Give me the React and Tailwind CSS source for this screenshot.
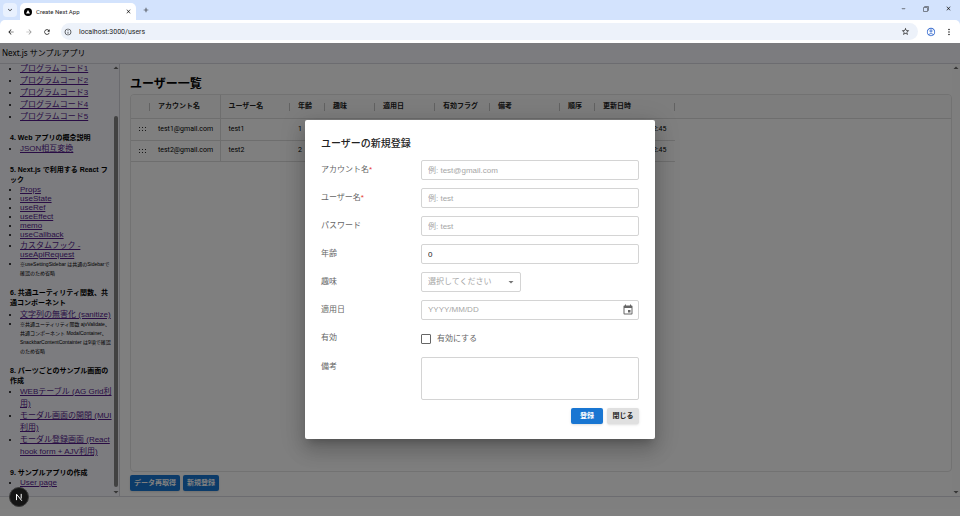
import React from 'react'
import { useState } from 'react';
import {
  MdArrowBack, MdArrowForward, MdRefresh, MdInfoOutline, MdStarBorder, MdMoreVert,
  MdClose, MdAdd, MdKeyboardArrowDown, MdArrowDropDown, MdArrowDropUp, MdEvent,
  MdMinimize, MdFilterNone, MdOutlineAccountCircle
} from 'react-icons/md';

const sections = [
  {
    title: '',
    items: [
      { text: 'プログラムコード1' },
      { text: 'プログラムコード2' },
      { text: 'プログラムコード3' },
      { text: 'プログラムコード4' },
      { text: 'プログラムコード5' }
    ]
  },
  { title: '4. Web アプリの概念説明', items: [{ text: 'JSON相互変換' }] },
  {
    title: '5. Next.js で利用する React フック',
    items: [
      { text: 'Props', compact: true },
      { text: 'useState', compact: true },
      { text: 'useRef', compact: true },
      { text: 'useEffect', compact: true },
      { text: 'memo', compact: true },
      { text: 'useCallback', compact: true },
      { text: 'カスタムフック - useApiRequest', compact: true },
      { text: '※useSettingSidebar は共通のSidebarで確認のため省略', note: true }
    ]
  },
  {
    title: '6. 共通ユーティリティ関数、共通コンポーネント',
    items: [
      { text: '文字列の無害化 (sanitize)', compact: true },
      { text: '※共通ユーティリティ関数 ajvValidate、共通コンポーネント ModalContainer、SnackbarContentContainter は9項で確認のため省略', note: true }
    ]
  },
  {
    title: '8. パーツごとのサンプル画面の作成',
    items: [
      { text: 'WEBテーブル (AG Grid利用)' },
      { text: 'モーダル画面の開閉 (MUI利用)' },
      { text: 'モーダル登録画面 (React hook form + AJV利用)' }
    ]
  },
  { title: '9. サンプルアプリの作成', items: [{ text: 'User page', compact: true }] }
];

const columns = [
  { label: '', width: 'w-[19px]' },
  { label: 'アカウント名', width: 'w-[70px]' },
  { label: 'ユーザー名', width: 'w-[70px]' },
  { label: '年齢', width: 'w-[35px]' },
  { label: '趣味', width: 'w-[50px]' },
  { label: '適用日', width: 'w-[60px]' },
  { label: '有効フラグ', width: 'w-[55px]' },
  { label: '備考', width: 'w-[70px]' },
  { label: '順序', width: 'w-[35px]' },
  { label: '更新日時', width: 'w-20' }
];

const users = [
  ['test1@gmail.com', 'test1', '1', '', '', '', '', '', '2025/1/12, 12:12:45'],
  ['test2@gmail.com', 'test2', '2', '', '', '', '', '', '2025/1/12, 12:12:45']
];

const fieldClass = 'block h-5 w-full rounded-[2px] border border-[#d4d4d4] bg-white px-1.5 text-[8px] text-[#222] placeholder:text-[#a6a6a6] outline-none';

const BrowserBar = () => (
  <div className="shrink-0 bg-[#d3e3fd] font-['Roboto','Noto_Sans_CJK_JP',sans-serif] text-[#1f1f1f]">
    <div className="flex h-5 items-end pl-[3px]">
      <button className="mb-[3px] flex h-3.5 w-3.5 items-center justify-center rounded-[4px] bg-[#e9f1fe]" aria-label="タブを検索">
        <MdKeyboardArrowDown className="h-2 w-2" />
      </button>
      <div className="ml-[3px] flex h-[17px] w-[116px] items-center rounded-t-[5px] bg-white px-1">
        <svg viewBox="0 0 16 16" className="h-2 w-2">
          <circle cx="8" cy="8" r="8" fill="#000" />
          <path d="M8 4.2l4 6.8H4z" fill="#fff" />
        </svg>
        <span className="ml-1 flex-1 text-[6px] leading-none">Create Next App</span>
        <button aria-label="閉じる"><MdClose className="h-[7px] w-[7px]" /></button>
      </div>
      <button className="mb-1.5 ml-1.5" aria-label="新しいタブ"><MdAdd className="h-2 w-2" /></button>
      <div className="ml-auto flex items-center gap-4 pr-2 pb-1.5">
        <MdMinimize className="mb-1 h-[7px] w-[7px]" />
        <MdFilterNone className="h-[6px] w-[6px] rotate-90 -scale-y-100" />
        <MdClose className="h-[7px] w-[7px]" />
      </div>
    </div>
    <div className="flex h-[23px] items-center rounded-t-[5px] bg-white pr-1.5 pl-[7px]">
      <button aria-label="戻る"><MdArrowBack className="h-2 w-2" /></button>
      <button className="ml-2.5 text-[#9a9a9a]" aria-label="進む"><MdArrowForward className="h-2 w-2" /></button>
      <button className="ml-2.5" aria-label="再読み込み"><MdRefresh className="h-2 w-2" /></button>
      <div className="ml-2.5 flex h-[17px] flex-1 items-center rounded-full bg-[#edf2fa] px-[3px] pr-2">
        <MdInfoOutline className="h-2 w-2" />
        <input
          className="ml-[7px] flex-1 bg-transparent text-[7px] leading-none outline-none"
          aria-label="アドレス"
          defaultValue="localhost:3000/users"
        />
        <MdStarBorder className="h-[9px] w-[9px]" />
      </div>
      <MdOutlineAccountCircle className="ml-2 h-2.5 w-2.5 text-[#3c6fd0]" />
      <MdMoreVert className="ml-2 h-2.5 w-2.5" />
    </div>
  </div>
);

const Sidebar = () => (
  <aside className="flex w-[120px] shrink-0 border-r border-[#d4d4dc] bg-[#f8f8ff]">
    <nav className="flex min-w-0 flex-1 flex-col justify-end overflow-hidden pb-[9px] pl-2.5">
      {sections.map((section, i) => (
        <div key={i} className={i > 0 ? 'mt-2.5' : ''}>
          {section.title && <h2 className="pr-0.5 text-[7px] leading-[10px] font-bold">{section.title}</h2>}
          <ul className="list-disc pl-2.5 text-[8px]">
            {section.items.map((item) => (
              <li key={item.text} className={item.compact || item.note ? 'leading-[normal]' : 'leading-3'}>
                {item.note
                  ? <span className="block text-[5px] leading-[9px]">{item.text}</span>
                  : <a href="#" className="text-[#551a8b] underline">{item.text}</a>}
              </li>
            ))}
          </ul>
        </div>
      ))}
    </nav>
    <div className="flex w-[7px] shrink-0 flex-col items-center text-[#6b6b6b]">
      <MdArrowDropUp className="h-2 w-2 scale-150" />
      <div className="mt-11 w-1 flex-1 rounded-full bg-[#858585]"></div>
      <MdArrowDropDown className="mt-px h-2 w-2 scale-150" />
    </div>
  </aside>
);

const UserGrid = () => (
  <div className="flex-1 overflow-hidden rounded-[4px] border border-[#e4e4e4] font-['Roboto','Noto_Sans_CJK_JP',sans-serif] text-[7px]">
    <div className="border-b border-[#dcdcdc] bg-[#fbfbfb]">
      <table className="table-fixed border-collapse">
        <thead>
          <tr className="h-[23px]">
            {columns.map((col, i) => (
              <th key={col.label} className={`${col.width} p-0 text-left font-bold whitespace-nowrap text-[#222] ${i === 1 ? 'border-r border-[#dcdcdc]' : ''}`}>
                <div className={`flex h-2 items-center pl-2 ${i === 1 ? '' : 'border-r border-[#c4c4c4]'}`}>{col.label}</div>
              </th>
            ))}
          </tr>
        </thead>
      </table>
    </div>
    <table className="table-fixed border-collapse">
      <tbody>
        {users.map((user) => (
          <tr key={user[0]} className="h-[21px] border-b border-[#dcdcdc]">
            <td className={`${columns[0].width} p-0`}>
              <svg viewBox="0 0 16 12" className="ml-2 h-1.5 w-2" fill="#333">
                {[2, 8].map((y) => [0, 6, 12].map((x) => <rect key={x + '-' + y} x={x} y={y} width="2" height="2" />))}
              </svg>
            </td>
            {user.map((value, i) => (
              <td key={i} className={`${columns[i + 1].width} p-0 pl-2 whitespace-nowrap ${i === 0 ? 'border-r border-[#dcdcdc]' : ''}`}>{value}</td>
            ))}
          </tr>
        ))}
      </tbody>
    </table>
  </div>
);

const FormRow = ({ id, label, required, children }) => (
  <div className="flex items-start">
    <label htmlFor={id} className="w-[100px] shrink-0 text-[8px] leading-5 text-[#666]">
      {label}{required && <span className="text-[#e53935]">*</span>}
    </label>
    <div className="min-w-0 flex-1">{children}</div>
  </div>
);

const UserModal = ({ onClose }) => {
  const [form, setForm] = useState({ account: '', name: '', password: '', age: '0', hobby: '', date: '', enabled: false, note: '' });

  const handleChange = (field, value) => {
    setForm({ ...form, [field]: value });
  };

  return (
    <div className="absolute inset-0 flex items-center justify-center bg-black/50">
      <form
        role="dialog"
        aria-labelledby="modal-title"
        onSubmit={(e) => e.preventDefault()}
        className="flex w-[350px] flex-col gap-2 rounded-[2px] bg-white px-4 pt-4 pb-[15px] shadow-[0_6px_8px_-4px_rgba(0,0,0,0.2),0_12px_19px_1px_rgba(0,0,0,0.14),0_4px_23px_4px_rgba(0,0,0,0.12)]"
      >
        <h2 id="modal-title" className="text-[10px] leading-4 font-medium text-[#222]">ユーザーの新規登録</h2>
        <FormRow id="account" label="アカウント名" required>
          <input id="account" className={fieldClass} placeholder="例: test@gmail.com" value={form.account} onChange={(e) => handleChange('account', e.target.value)} />
        </FormRow>
        <FormRow id="name" label="ユーザー名" required>
          <input id="name" className={fieldClass} placeholder="例: test" value={form.name} onChange={(e) => handleChange('name', e.target.value)} />
        </FormRow>
        <FormRow id="password" label="パスワード">
          <input id="password" type="password" className={fieldClass} placeholder="例: test" value={form.password} onChange={(e) => handleChange('password', e.target.value)} />
        </FormRow>
        <FormRow id="age" label="年齢">
          <input id="age" className={fieldClass} value={form.age} onChange={(e) => handleChange('age', e.target.value)} />
        </FormRow>
        <FormRow id="hobby" label="趣味">
          <div className="relative w-[100px]">
            <select
              id="hobby"
              className="block h-5 w-full appearance-none rounded-[2px] border border-[#d4d4d4] bg-white px-1.5 text-[8px] text-[#a6a6a6] outline-none"
              value={form.hobby}
              onChange={(e) => handleChange('hobby', e.target.value)}
            >
              <option value="">選択してください</option>
            </select>
            <MdArrowDropDown className="pointer-events-none absolute top-1 right-1 h-3 w-3 text-[#757575]" />
          </div>
        </FormRow>
        <FormRow id="date" label="適用日">
          <div className="flex h-5 items-center rounded-[2px] border border-[#d4d4d4] pr-1">
            <input
              id="date"
              className="min-w-0 flex-1 px-1.5 text-[8px] text-[#222] placeholder:text-[#a6a6a6] outline-none"
              placeholder="YYYY/MM/DD"
              value={form.date}
              onChange={(e) => handleChange('date', e.target.value)}
            />
            <button type="button" aria-label="日付を選択"><MdEvent className="h-3 w-3 text-[#666]" /></button>
          </div>
        </FormRow>
        <FormRow id="enabled" label="有効">
          <div className="flex h-[21px] items-center gap-1.5">
            <input
              id="enabled"
              type="checkbox"
              className="h-2.5 w-2.5 appearance-none rounded-[1px] border border-[#666] checked:bg-[#1976d2]"
              checked={form.enabled}
              onChange={(e) => handleChange('enabled', e.target.checked)}
            />
            <label htmlFor="enabled" className="text-[8px] text-[#666]">有効にする</label>
          </div>
        </FormRow>
        <FormRow id="note" label="備考">
          <textarea
            id="note"
            className="block h-[43px] w-full resize-none rounded-[2px] border border-[#d4d4d4] p-1.5 text-[8px] outline-none"
            value={form.note}
            onChange={(e) => handleChange('note', e.target.value)}
          />
        </FormRow>
        <div className="flex justify-end gap-1">
          <button type="submit" className="h-4 w-8 rounded-[2px] bg-[#1976d2] text-[7px] font-bold text-white shadow-sm">登録</button>
          <button type="button" onClick={onClose} className="h-4 w-8 rounded-[2px] bg-[#e0e0e0] text-[7px] font-bold text-[#222] shadow-sm">閉じる</button>
        </div>
      </form>
    </div>
  );
};

const App = () => {
  const [showModal, setShowModal] = useState(true);

  return (
    <div className="flex h-screen flex-col overflow-hidden font-['Liberation_Sans','Noto_Sans_CJK_JP',sans-serif] text-black">
      <BrowserBar />
      <div className="relative flex min-h-0 flex-1 flex-col bg-white">
        <header className="flex h-[21px] shrink-0 items-center border-b border-[#d8d8e0] bg-[#f8f8ff] px-0.5 font-['Noto_Sans','Noto_Sans_CJK_JP',sans-serif] text-[8px]">
          Next.js サンプルアプリ
        </header>
        <div className="flex min-h-0 flex-1">
          <Sidebar />
          <main className="flex min-w-0 flex-1 flex-col pt-2.5 pb-[5px] pl-2.5">
            <h1 className="text-xs leading-5 font-bold">ユーザー一覧</h1>
            <UserGrid />
            <div className="mt-[3px] flex gap-[3px]">
              <button className="h-4 rounded-[2px] bg-[#1976d2] px-1 text-[7px] font-bold text-white shadow-sm">データ再取得</button>
              <button onClick={() => setShowModal(true)} className="h-4 rounded-[2px] bg-[#1976d2] px-1 text-[7px] font-bold text-white shadow-sm">新規登録</button>
            </div>
          </main>
          <div className="flex w-2 shrink-0 flex-col items-center justify-between bg-[#fcfcfc] text-[#6b6b6b]">
            <MdArrowDropUp className="h-2 w-2 scale-150" />
            <MdArrowDropDown className="h-2 w-2 scale-150" />
          </div>
        </div>
        <footer className="h-5 shrink-0 border-t border-[#d8d8e0]"></footer>
        {showModal && <UserModal onClose={() => setShowModal(false)} />}
        <button aria-label="Next.js" className="absolute bottom-[9px] left-[9px] flex h-5 w-5 items-center justify-center rounded-full border border-[#3a3a3a] bg-[#151515]">
          <svg viewBox="0 0 16 16" className="h-2.5 w-2.5" fill="none" stroke="#fff" strokeWidth="1.6">
            <path d="M4 13V3.5L12.5 14M11.5 3v7.5" />
          </svg>
        </button>
      </div>
    </div>
  );
};

export default App
